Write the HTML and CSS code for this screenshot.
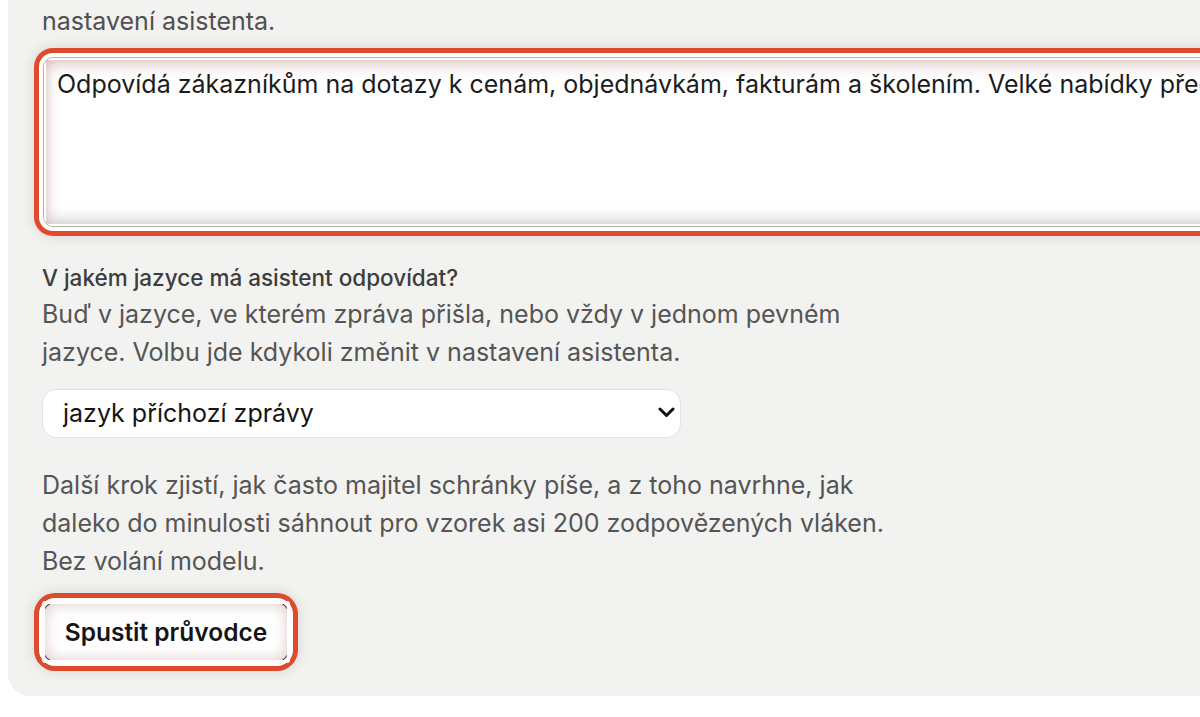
FILE: index.html
```html
<!DOCTYPE html>
<html lang="cs">
<head>
<meta charset="utf-8">
<title>Průvodce asistentem</title>
<link rel="stylesheet" href="styles.css">
</head>
<body>
<main class="card">
  <p class="lead">nastavení asistenta.</p>

  <div class="ring ring-area">
    <textarea class="area" rows="4">Odpovídá zákazníkům na dotazy k cenám, objednávkám, fakturám a školením. Velké nabídky předává obchodnímu oddělení.</textarea>
  </div>

  <label class="label" for="lang">V jakém jazyce má asistent odpovídat?</label>
  <p class="hint">Buď v jazyce, ve kterém zpráva přišla, nebo vždy v jednom pevném<br>jazyce. Volbu jde kdykoli změnit v nastavení asistenta.</p>

  <div class="select-wrap">
    <select id="lang" class="select">
      <option>jazyk příchozí zprávy</option>
      <option>čeština</option>
      <option>angličtina</option>
    </select>
    <svg class="chev" width="17" height="11" viewBox="0 0 17 11" aria-hidden="true"><path d="M2 2 L8.5 8.5 L15 2" fill="none" stroke="#111" stroke-width="3" stroke-linecap="round" stroke-linejoin="round"/></svg>
  </div>

  <p class="hint note">Další krok zjistí, jak často majitel schránky píše, a z toho navrhne, jak<br>daleko do minulosti sáhnout pro vzorek asi 200 zodpovězených vláken.<br>Bez volání modelu.</p>

  <div class="ring ring-btn">
    <button class="btn" type="button">Spustit průvodce</button>
  </div>
</main>
</body>
</html>
```
FILE: styles.css
```css
html, body {
  margin: 0;
  padding: 0;
  background: #ffffff;
  overflow: hidden;
}

body {
  padding-left: 8px;
  font-family: "Inter", "Noto Sans", sans-serif;
}

.card {
  width: 1400px;
  background: #f2f2f0;
  border-radius: 0 0 22px 22px;
  padding: 3px 0 34px 34px;
  display: flex;
  flex-direction: column;
  align-items: flex-start;
}

.lead {
  margin: 0;
  font-size: 25px;
  line-height: 37.5px;
  color: #505050;
  white-space: nowrap;
}

.ring {
  position: relative;
  border-radius: 10px;
  box-shadow:
    0 0 0 4px #ffffff,
    0 0 0 9px #df4a2c,
    0 0 12px 10px rgba(60, 40, 40, 0.12);
}

.ring::after {
  content: "";
  position: absolute;
  inset: -1px;
  border: 3px solid #ffffff;
  border-radius: 3px;
  pointer-events: none;
}

.ring-area {
  margin: 16px 0 0 1px;
  width: 1300px;
  height: 170px;
  border: 1px solid #b9b0ae;
  background: #ffffff;
  box-sizing: border-box;
  overflow: hidden;
}

.area {
  display: block;
  width: 100%;
  height: 100%;
  box-sizing: border-box;
  border: 0;
  margin: 0;
  resize: none;
  padding: 8px 13px;
  font-family: "Inter", "Noto Sans", sans-serif;
  font-size: 25px;
  line-height: 36px;
  color: #1c1c1c;
  background: #ffffff;
  box-shadow: inset 0 6px 15px rgba(170, 110, 110, 0.42), inset 0 -8px 13px rgba(120, 110, 110, 0.24);
  outline: none;
  white-space: nowrap;
  overflow: hidden;
}

.label {
  margin-top: 37px;
  font-size: 22.5px;
  line-height: 28px;
  font-weight: 500;
  color: #3d3d3d;
}

.hint {
  margin: 3px 0 0;
  font-size: 25px;
  line-height: 38px;
  color: #555555;
  white-space: nowrap;
}

.select-wrap {
  position: relative;
  margin-top: 18px;
  width: 639px;
}

.select {
  display: block;
  width: 100%;
  height: 49px;
  box-sizing: border-box;
  appearance: none;
  -webkit-appearance: none;
  background: #ffffff;
  border: 1px solid #e3e2df;
  border-radius: 14px;
  padding: 0 40px 0 20px;
  font-family: "Inter", "Noto Sans", sans-serif;
  font-size: 25px;
  color: #151515;
}

.chev {
  position: absolute;
  right: 6px;
  top: 18px;
}

.note {
  margin-top: 28px;
}

.ring-btn {
  margin: 22px 0 0 1px;
  border-radius: 12px;
}

.btn {
  display: block;
  box-sizing: border-box;
  width: 246px;
  height: 60px;
  margin: 0;
  border: 1px solid #2a2222;
  border-radius: 12px;
  background: #ffffff;
  font-family: "Inter", "Noto Sans", sans-serif;
  font-size: 24.5px;
  font-weight: 600;
  color: #151515;
  box-shadow: inset 0 0 15px rgba(170, 110, 110, 0.42);
  cursor: pointer;
}
```
